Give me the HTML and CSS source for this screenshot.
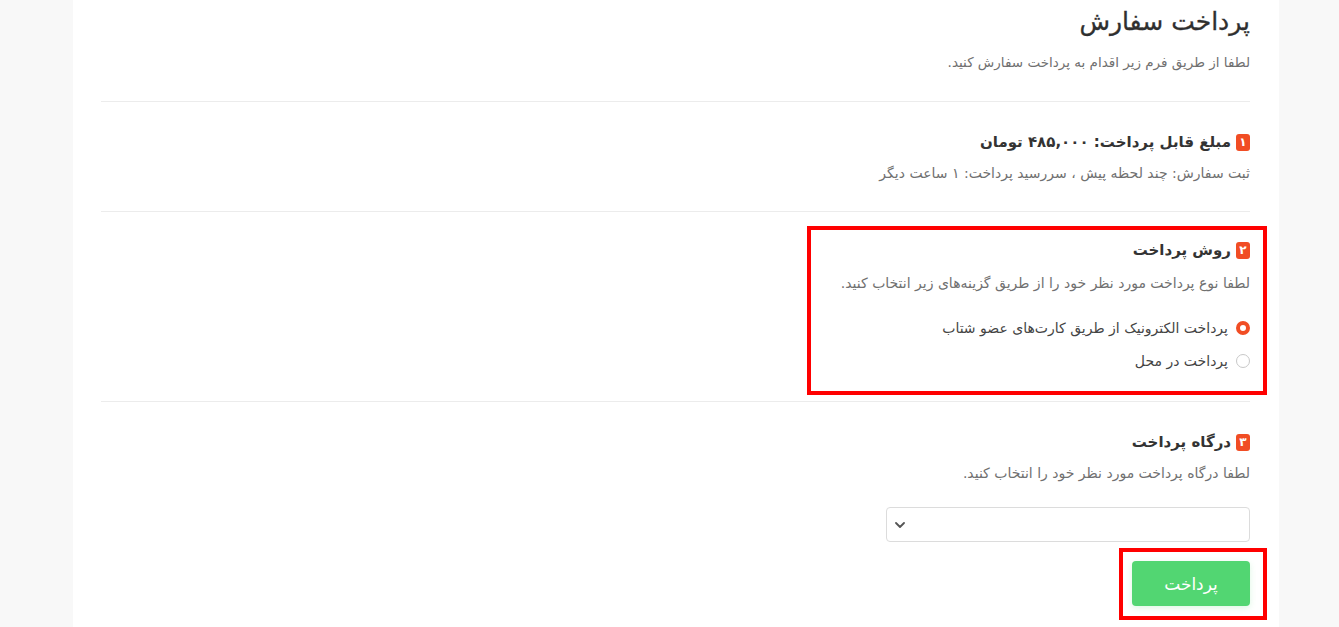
FILE: index.html
```html
<!DOCTYPE html>
<html lang="fa" dir="rtl">
<head>
    <meta charset="UTF-8">
    <meta name="viewport" content="width=device-width, initial-scale=1.0">
    <title>پرداخت سفارش</title>
    <link rel="stylesheet" href="styles.css">
</head>
<body>
    <div class="pagina">
        <div class="tarjeta">
            <header class="cabecera">
                <h1 class="titulo">پرداخت سفارش</h1>
                <p class="texto">لطفا از طریق فرم زیر اقدام به پرداخت سفارش کنید.</p>
            </header>

            <section class="paso">
                <h2 class="paso-titulo"><span class="numero">۱</span>مبلغ قابل پرداخت: ۴۸۵,۰۰۰ تومان</h2>
                <p class="texto">ثبت سفارش: چند لحظه پیش ، سررسید پرداخت: ۱ ساعت دیگر</p>
            </section>

            <section class="paso paso-marcado">
                <div class="marca">
                    <h2 class="paso-titulo"><span class="numero">۲</span>روش پرداخت</h2>
                    <p class="texto">لطفا نوع پرداخت مورد نظر خود را از طریق گزینه‌های زیر انتخاب کنید.</p>
                    <div class="opciones">
                        <label class="opcion"><span class="radio activo"></span>پرداخت الکترونیک از طریق کارت‌های عضو شتاب</label>
                        <label class="opcion"><span class="radio"></span>پرداخت در محل</label>
                    </div>
                </div>
            </section>

            <section class="paso paso-ultimo">
                <h2 class="paso-titulo"><span class="numero">۳</span>درگاه پرداخت</h2>
                <p class="texto">لطفا درگاه پرداخت مورد نظر خود را انتخاب کنید.</p>
                <div class="selector">
                    <svg width="10" height="6" viewBox="0 0 10 6"><path d="M1 1l4 4 4-4" fill="none" stroke="#555" stroke-width="1.8" stroke-linecap="round" stroke-linejoin="round"/></svg>
                </div>
                <div class="marca marca-boton">
                    <button class="boton">پرداخت</button>
                </div>
            </section>
        </div>
    </div>
</body>
</html>
```

FILE: styles.css
```css
/* Estilos generales */
* {
    box-sizing: border-box;
}
body {
    margin: 0;
    background-color: #f8f8f8;
    font-family: "DejaVu Sans", sans-serif;
    color: #333;
}

/* Contenedor */
.pagina {
    margin: 0 60px 0 73px;
    height: 627px;
    overflow: hidden;
}
.tarjeta {
    background: #fff;
    box-shadow: 0 0 14px rgba(0, 0, 0, 0.05);
    padding: 4px 29px 0 28px;
    min-height: 100%;
}

/* Cabecera */
.titulo {
    margin: 0;
    font-size: 25px;
    line-height: 36px;
    font-weight: normal;
    color: #2f2f2f;
    -webkit-text-stroke: 0.3px #2f2f2f;
}
.cabecera {
    padding-bottom: 28px;
    border-bottom: 1px solid #ececec;
}
.cabecera .texto {
    margin-top: 11px;
    font-size: 13.5px;
}

.texto {
    margin: 8px 0 0;
    font-size: 14px;
    line-height: 22px;
    color: #707070;
}

/* Pasos */
.paso {
    padding: 28px 0 27px;
    border-bottom: 1px solid #ececec;
}
.paso-titulo {
    margin: 0;
    font-size: 15px;
    line-height: 24px;
    font-weight: bold;
    color: #333;
    display: flex;
    align-items: center;
}
.numero {
    display: inline-block;
    width: 14px;
    height: 17px;
    line-height: 17px;
    margin-left: 5px;
    border-radius: 3px;
    background: #f14d24;
    color: #fff;
    font-size: 12px;
    font-weight: bold;
    text-align: center;
}

/* Paso marcado */
.paso-marcado {
    padding: 14px 0 6px;
}
.marca {
    display: inline-block;
    border: 4px solid #ff0000;
    margin-right: -17px;
    padding: 8px 13px 19px 30px;
}
.paso-marcado .texto {
    margin-top: 10px;
}

/* Opciones */
.opciones {
    margin-top: 23px;
    display: flex;
    flex-direction: column;
    gap: 11px;
}
.opcion {
    display: flex;
    align-items: center;
    font-size: 14px;
    line-height: 22px;
    color: #444;
}
.radio {
    width: 14px;
    height: 14px;
    margin-left: 8px;
    border-radius: 50%;
    border: 1px solid #c8c8c8;
}
.radio.activo {
    border: 4px solid #f14d24;
}

/* Selector */
.paso-ultimo {
    border-bottom: none;
    padding-bottom: 0;
}
.selector {
    margin-top: 23px;
    width: 364px;
    height: 35px;
    border: 1px solid #dcdcdc;
    border-radius: 4px;
    display: flex;
    align-items: center;
    justify-content: flex-end;
    padding-left: 8px;
}

/* Boton */
.marca-boton {
    display: block;
    width: 148px;
    margin-top: 6px;
    padding: 9px 13px 10px 9px;
}
.boton {
    width: 118px;
    height: 45px;
    border: none;
    border-radius: 4px;
    background: #52d672;
    color: #fff;
    font-family: "DejaVu Sans", sans-serif;
    font-size: 17px;
    box-shadow: 0 2px 6px rgba(82, 214, 114, 0.2);
    cursor: pointer;
}
```
